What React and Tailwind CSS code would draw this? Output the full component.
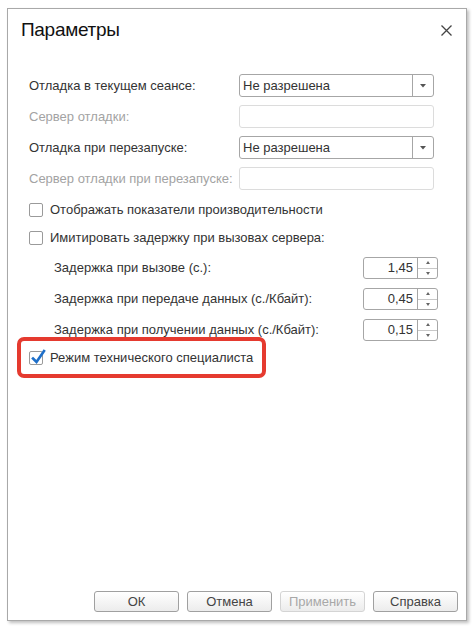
import React from "react";

const font = { fontFamily: '"Liberation Sans", Arial, sans-serif' };

function Combo({ value }) {
  return (
    <div className="flex h-[23px] w-[195px] rounded-[3px] border border-[#a6a6a6] bg-white">
      <div className="flex flex-1 items-center pl-[3px] text-[13px] text-[#333]">{value}</div>
      <div className="flex w-[21px] items-center justify-center border-l border-[#a6a6a6]">
        <svg width="6" height="4" viewBox="0 0 6 4"><path d="M0 0H6L3 3.5Z" fill="#555" /></svg>
      </div>
    </div>
  );
}

function Disabled() {
  return <div className="h-[23px] w-[195px] rounded-[3px] border border-[#dcdcdc] bg-white" />;
}

function Check({ checked }) {
  return (
    <div className="relative h-[14px] w-[14px] shrink-0 rounded-[2px] border border-[#9a9a9a] bg-white">
      {checked && (
        <svg className="absolute left-[1px] top-[-3px]" width="15" height="16" viewBox="0 0 15 16">
          <path d="M2 9.5L5.5 13L13 2" stroke="#1e6fc9" strokeWidth="2.6" fill="none" strokeLinecap="square" />
        </svg>
      )}
    </div>
  );
}

function Spin({ value }) {
  return (
    <div className="flex h-[22px] w-[75px] rounded-[3px] border border-[#a6a6a6] bg-white">
      <div className="flex flex-1 items-center justify-end pr-[4px] text-[13px] text-[#333]">{value}</div>
      <div className="flex w-[20px] flex-col border-l border-[#a6a6a6]">
        <div className="flex flex-1 items-center justify-center border-b border-[#c8c8c8]">
          <svg width="4" height="3" viewBox="0 0 4 3"><path d="M0 3H4L2 0Z" fill="#666" /></svg>
        </div>
        <div className="flex flex-1 items-center justify-center">
          <svg width="4" height="3" viewBox="0 0 4 3"><path d="M0 0H4L2 3Z" fill="#666" /></svg>
        </div>
      </div>
    </div>
  );
}

function Btn({ children, disabled }) {
  return (
    <div
      className={
        "flex h-[21px] w-[85px] items-center justify-center rounded-[3px] border bg-gradient-to-b from-white to-[#ececec] text-[13px] font-normal " +
        (disabled ? "border-[#d4d4d4] text-[#a8a8a8]" : "border-[#a0a0a0] text-[#444]")
      }
    >
      {children}
    </div>
  );
}

export default function App() {
  return (
    <div className="min-h-[628px] w-[474px] bg-white pl-[7px] pt-[8px]" style={font}>
      <div className="flex h-[613px] w-[460px] flex-col border border-[#a9a9a9] bg-white shadow-[2px_2px_3px_rgba(0,0,0,0.25)]">
        <div className="mt-[9px] flex h-[24px] items-center justify-between pl-[13px] pr-[14px]">
          <div className="text-[19px] leading-[24px] tracking-[-0.3px] text-[#111]">Параметры</div>
          <svg width="11" height="11" viewBox="0 0 11 11">
            <path d="M0.5 0.5L10.5 10.5M10.5 0.5L0.5 10.5" stroke="#444" strokeWidth="1.3" />
          </svg>
        </div>

        <div className="mt-[32px] flex flex-col pl-[21px] text-[13px] text-[#333]">
          <div className="flex h-[23px] items-center">
            <div className="w-[210px]">Отладка в текущем сеансе:</div>
            <Combo value="Не разрешена" />
          </div>
          <div className="mt-[8px] flex h-[23px] items-center">
            <div className="w-[210px] text-[#a3a3a3]">Сервер отладки:</div>
            <Disabled />
          </div>
          <div className="mt-[8px] flex h-[23px] items-center">
            <div className="w-[210px]">Отладка при перезапуске:</div>
            <Combo value="Не разрешена" />
          </div>
          <div className="mt-[8px] flex h-[23px] items-center">
            <div className="w-[210px] text-[#a3a3a3]">Сервер отладки при перезапуске:</div>
            <Disabled />
          </div>

          <div className="mt-[9px] flex h-[22px] items-center gap-[7px]">
            <Check />
            <span>Отображать показатели производительности</span>
          </div>
          <div className="mt-[6px] flex h-[22px] items-center gap-[7px]">
            <Check />
            <span>Имитировать задержку при вызовах сервера:</span>
          </div>

          <div className="mt-[8px] flex h-[22px] items-center pl-[25px] pr-[28px]">
            <div className="flex-1">Задержка при вызове (с.):</div>
            <Spin value="1,45" />
          </div>
          <div className="mt-[9px] flex h-[22px] items-center pl-[25px] pr-[28px]">
            <div className="flex-1">Задержка при передаче данных (с./Кбайт):</div>
            <Spin value="0,45" />
          </div>
          <div className="mt-[9px] flex h-[22px] items-center pl-[25px] pr-[28px]">
            <div className="flex-1">Задержка при получении данных (с./Кбайт):</div>
            <Spin value="0,15" />
          </div>

          <div className="relative mt-[6px] flex h-[22px] items-center gap-[7px]">
            <Check checked />
            <span>Режим технического специалиста</span>
            <div className="absolute left-[-12px] top-[-10px] h-[41px] w-[249px] rounded-[7px] border-[4px] border-[#e53a2f]" />
          </div>
        </div>

        <div className="mt-auto mb-[8px] flex justify-end gap-[8px] pr-[8px]">
          <Btn>ОК</Btn>
          <Btn>Отмена</Btn>
          <Btn disabled>Применить</Btn>
          <Btn>Справка</Btn>
        </div>
      </div>
    </div>
  );
}
